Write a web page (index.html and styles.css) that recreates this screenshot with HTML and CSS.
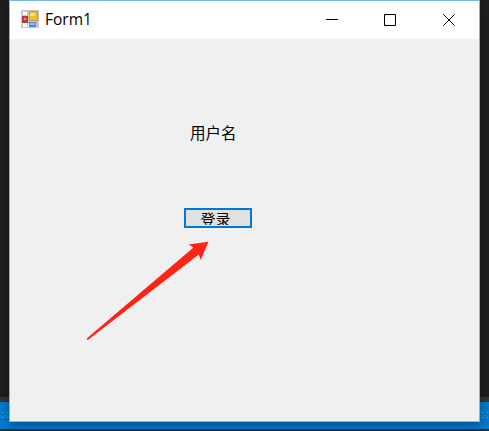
FILE: index.html
```html
<!DOCTYPE html>
<html lang="zh-CN">
<head>
<meta charset="utf-8">
<title>Form1</title>
<link rel="stylesheet" href="styles.css">
</head>
<body>
<div class="desktop">
  <main class="window">
    <header class="titlebar">
      <svg class="app-icon" width="18" height="18" viewBox="0 0 18 18" shape-rendering="crispEdges">
        <rect width="18" height="18" fill="#c9c9c9"/>
        <path fill="#fff" d="M2 2h4v3H2zM2 13h4v4H2zM7 14h1v3H7z"/>
        <rect x="1" y="6" width="6" height="7" fill="#b5393a"/>
        <rect x="2" y="7" width="4" height="5" fill="#c83b35"/>
        <rect x="3" y="8" width="2" height="2" fill="#ed8d82"/>
        <rect x="8" y="1" width="9" height="10" fill="#c99a2c"/>
        <rect x="9" y="2" width="7" height="8" fill="#f0c02e"/>
        <rect x="9" y="3" width="5" height="3" fill="#ffe077"/>
        <rect x="8" y="12" width="7" height="5" fill="#4d88dc"/>
        <rect x="9" y="13" width="5" height="2" fill="#8dbcf8"/>
      </svg>
      <h1 class="title">Form1</h1>
      <div class="controls">
        <svg width="12" height="12" viewBox="0 0 12 12"><path d="M0 5.5h12"/></svg>
        <svg width="12" height="12" viewBox="0 0 12 12"><path d="M.5.5h11v11H.5z"/></svg>
        <svg width="12" height="12" viewBox="0 0 12 12"><path d="M.3.3l11.4 11.4M11.7.3L.3 11.7"/></svg>
      </div>
    </header>
    <section class="client">
      <span class="label">用户名</span>
      <button class="login" type="button"><span class="login-text">登录</span></button>
    </section>
  </main>
  <footer class="statusbar"><i class="grip"></i><i class="grip"></i></footer>
  <svg class="arrow" width="124" height="100" viewBox="86 241 124 100"><path fill="#ff2314" d="M208.5 241.8L188.5 244.5l5 3L87 338.3v1.5h1.2L198.8 254.5l2 5.5z"/></svg>
</div>
</body>
</html>
```
FILE: styles.css
```css
* { box-sizing: border-box; }
body { margin: 0; font-family: "Noto Sans CJK SC", sans-serif; }
.desktop {
  position: relative;
  width: 489px;
  height: 431px;
  padding: 0 9px;
  overflow: hidden;
  background: linear-gradient(#1e1e1e 0 397px, #343436 397px 402px, #007acc 402px 429px, #2d2d30 429px);
}
.window {
  position: relative;
  z-index: 1;
  width: 471px;
  height: 422px;
  border: 1px solid #76b5f1;
  border-bottom-color: #8fb4cf;
  background: #f0f0f0;
  box-shadow: 0 3px 10px rgba(0, 0, 0, .35);
}
.titlebar {
  display: flex;
  height: 38px;
  padding: 9px 24px 0 11px;
  background: #fff;
}
.title {
  margin: -1px 0 0 6px;
  font: 15.5px/20px "Open Sans", sans-serif;
  color: #000;
}
.controls {
  display: flex;
  gap: 46px;
  margin: 4px 0 0 auto;
}
.controls svg { fill: none; stroke: #000; }
.controls svg:last-child { margin-left: 1px; }
.client {
  display: flex;
  flex-direction: column;
  align-items: flex-start;
  padding: 83px 0 0 174px;
}
.label {
  height: 20px;
  margin-left: 6px;
  font-size: 15.5px;
  line-height: 20px;
}
.login {
  display: flex;
  align-items: flex-start;
  justify-content: center;
  width: 68px;
  height: 20px;
  margin-top: 66px;
  padding: 1px 5px 0 0;
  border: 2px solid #0078d7;
  background: #e1e1e1;
  color: #000;
  font: 15px/16px "Noto Sans CJK SC", sans-serif;
}
.login-text {
  height: 14px;
  overflow: hidden;
}
.statusbar {
  display: flex;
  justify-content: space-between;
  margin: -20px -9px 0;
  padding-top: 8px;
}
.grip {
  width: 9px;
  height: 9px;
  background:
    radial-gradient(circle, #63aee0 0 .7px, transparent 1px) 0 0 / 5px 5px,
    radial-gradient(circle, #3b98d6 0 .7px, transparent 1px) 2.5px 2.5px / 5px 5px;
}
.arrow {
  position: absolute;
  z-index: 2;
  left: 86px;
  top: 241px;
}
```
